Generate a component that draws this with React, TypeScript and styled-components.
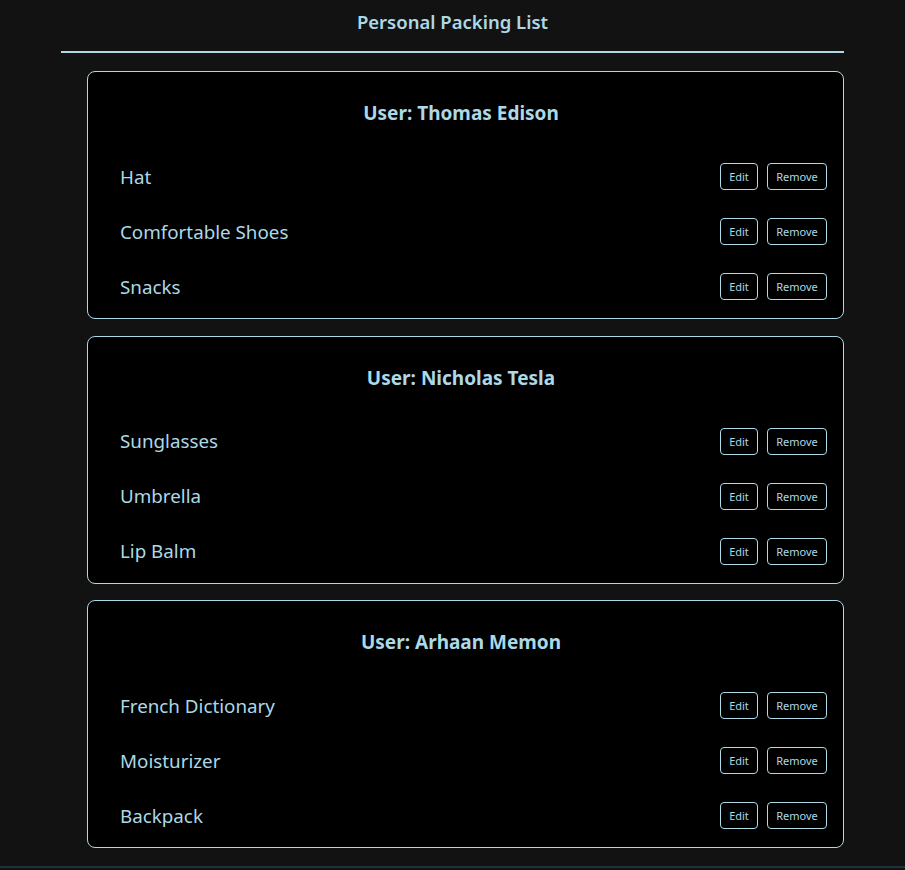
import React from "react";
import styled, { createGlobalStyle } from "styled-components";

const Global = createGlobalStyle`
  html, body { margin: 0; padding: 0; background: #121212; }
  body { font-family: "Noto Sans", "Open Sans", sans-serif; color: #add8e6; }
`;

const Page = styled.div`
  display: flex;
  flex-direction: column;
  align-items: center;
`;

const Title = styled.h2`
  margin: 0;
  height: 43px;
  display: flex;
  align-items: center;
  justify-content: center;
  font-size: 18.5px;
  font-weight: 600;
  color: #add8e6;
`;

const Rule = styled.hr`
  width: 783px;
  margin: 8px 0 18px;
  border: none;
  border-top: 2px solid #add8e6;
`;

const Lists = styled.div`
  width: 783px;
  display: flex;
  flex-direction: column;
  align-items: flex-end;
  gap: 16.5px;
`;

const Card = styled.section`
  width: 757px;
  box-sizing: border-box;
  background: #000;
  border: 1px solid #add8e6;
  border-radius: 8px;
  padding: 20px 16px 4px 32px;
`;

const CardTitle = styled.h3`
  margin: 0 25px 15px 0;
  height: 42px;
  display: flex;
  align-items: center;
  justify-content: center;
  font-size: 19px;
  font-weight: 700;
  color: #add8e6;
`;

const Row = styled.div`
  height: 55px;
  display: flex;
  align-items: center;
  justify-content: space-between;
`;

const ItemName = styled.span`
  font-size: 18.8px;
  color: #add8e6;
`;

const Actions = styled.div`
  display: flex;
  gap: 9px;
`;

const Btn = styled.button<{ $w: number }>`
  width: ${(p) => p.$w}px;
  height: 27px;
  box-sizing: border-box;
  background: #000;
  color: #add8e6;
  border: 1px solid #add8e6;
  border-radius: 4px;
  font-family: "Noto Sans", "Open Sans", sans-serif;
  font-size: 11px;
  padding: 0;
`;

const Footer = styled.div`
  width: 100%;
  height: 20px;
  margin-top: 18px;
  border-top: 2px solid #1d3338;
`;

const data = [
  { user: "Thomas Edison", items: ["Hat", "Comfortable Shoes", "Snacks"] },
  { user: "Nicholas Tesla", items: ["Sunglasses", "Umbrella", "Lip Balm"] },
  { user: "Arhaan Memon", items: ["French Dictionary", "Moisturizer", "Backpack"] },
];

export default function App() {
  return (
    <>
      <Global />
      <Page>
        <Title>Personal Packing List</Title>
        <Rule />
        <Lists>
          {data.map((u) => (
            <Card key={u.user}>
              <CardTitle>User: {u.user}</CardTitle>
              {u.items.map((it) => (
                <Row key={it}>
                  <ItemName>{it}</ItemName>
                  <Actions>
                    <Btn $w={38}>Edit</Btn>
                    <Btn $w={60}>Remove</Btn>
                  </Actions>
                </Row>
              ))}
            </Card>
          ))}
        </Lists>
        <Footer />
      </Page>
    </>
  );
}
